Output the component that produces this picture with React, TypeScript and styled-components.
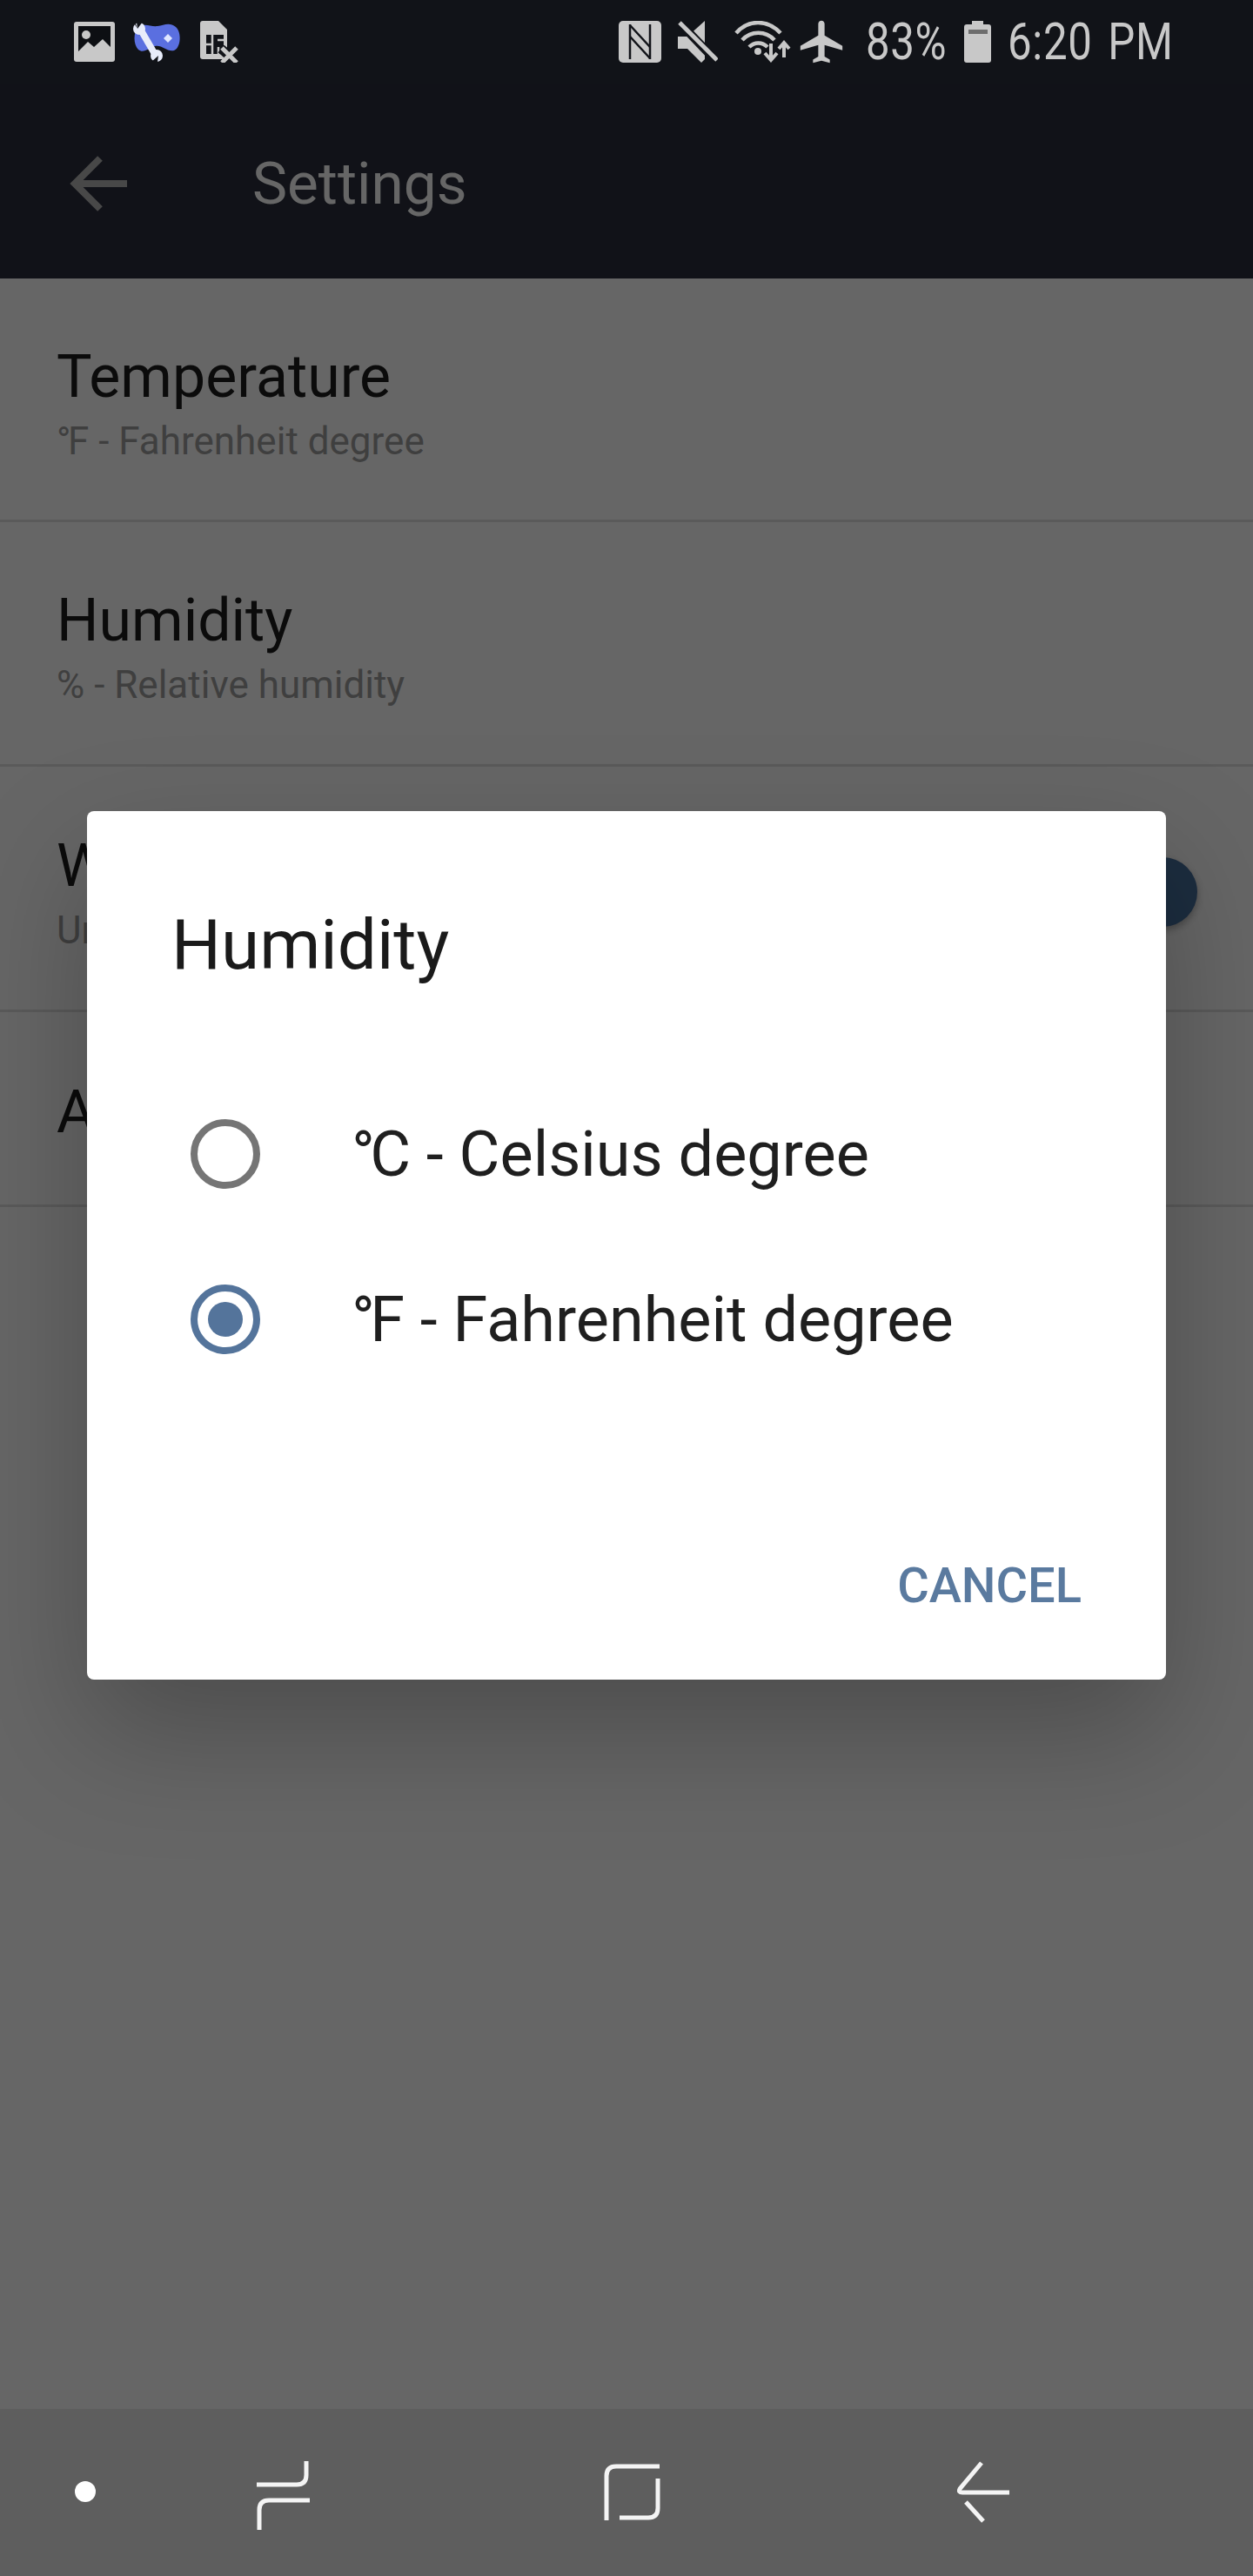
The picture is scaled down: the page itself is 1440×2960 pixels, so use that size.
import styled, { createGlobalStyle } from "styled-components";
import { MdAirplanemodeActive } from "react-icons/md";

const GlobalStyle = createGlobalStyle`
	html, body {
		margin: 0;
		padding: 0;
		background: #fff;
	}
	* {
		box-sizing: border-box;
	}
`;

const Phone = styled.div`
	position: relative;
	width: 1440px;
	height: 2960px;
	display: flex;
	flex-direction: column;
	overflow: hidden;
	background: #fff;
	font-family: Roboto, "Liberation Sans", sans-serif;
`;

const StatusBar = styled.div`
	position: relative;
	z-index: 2;
	height: 96px;
	flex: none;
	display: flex;
	align-items: center;
	justify-content: space-between;
	padding: 0 91px 0 85px;
	background: #111318;
	color: #c8c8c8;
`;

const IconGroup = styled.div<{ gap: number }>`
	display: flex;
	align-items: center;
	gap: ${props => props.gap}px;
`;

const StatusText = styled.span<{ width: number }>`
	display: inline-block;
	width: ${props => props.width}px;
	font-size: 60px;
	line-height: 72px;
	font-weight: 400;
	word-spacing: 6px;
	letter-spacing: 0.8px;
	white-space: nowrap;
	transform: scaleX(0.82);
	transform-origin: left center;
`;

const PlaneIcon = styled(MdAirplanemodeActive)`
	margin: 0 3px 0 -14px;
`;

const Toolbar = styled.div`
	height: 224px;
	flex: none;
	display: flex;
	align-items: center;
	padding: 6px 0 0 80px;
	background: #2b2f3c;
	color: #fff;
`;

const ToolbarTitle = styled.h1`
	margin: 0 0 0 144px;
	font-size: 67.5px;
	line-height: 80px;
	font-weight: 400;
`;

const Row = styled.div<{ height: number }>`
	height: ${props => props.height}px;
	flex: none;
	display: flex;
	align-items: center;
	justify-content: space-between;
	padding: 8px 64px 0 65px;
	border-bottom: 3px solid #e0e0e0;
`;

const RowTitle = styled.div`
	font-size: 68px;
	line-height: 84px;
	color: #1c1c1c;
`;

const RowSub = styled.div`
	margin-top: 4px;
	font-size: 44px;
	line-height: 56px;
	color: #9e9e9e;
`;

const Degree = styled.span`
	letter-spacing: -0.08em;
`;

const Thumb = styled.div`
	width: 80px;
	height: 80px;
	border-radius: 50%;
	background: #48709f;
	box-shadow: 0 4px 8px rgba(0, 0, 0, 0.3);
`;

const Scrim = styled.div`
	position: absolute;
	inset: 0;
	z-index: 1;
	padding-top: 932px;
	background: rgba(0, 0, 0, 0.6);
`;

const Dialog = styled.div`
	width: 1240px;
	height: 998px;
	margin-left: 100px;
	display: flex;
	flex-direction: column;
	background: #fff;
	border-radius: 8px;
	box-shadow: 0 60px 140px rgba(0, 0, 0, 0.25);
`;

const DialogTitle = styled.h2`
	margin: 0;
	padding: 108px 0 0 97px;
	font-size: 80px;
	line-height: 92px;
	font-weight: 400;
	color: #1a1a1a;
`;

const Options = styled.div`
	margin-top: 99px;
	display: flex;
	flex-direction: column;
`;

const Option = styled.div`
	height: 190px;
	display: flex;
	align-items: center;
	gap: 105px;
	padding-left: 119px;
	font-size: 72px;
	color: #1f1f1f;
`;

const Radio = styled.div<{ checked?: boolean }>`
	width: 80px;
	height: 80px;
	flex: none;
	display: flex;
	align-items: center;
	justify-content: center;
	border-radius: 50%;
	border: 8px solid ${props => (props.checked ? "#54749b" : "#757575")};
	&::after {
		content: "";
		display: ${props => (props.checked ? "block" : "none")};
		width: 40px;
		height: 40px;
		border-radius: 50%;
		background: #54749b;
	}
`;

const DialogFooter = styled.div`
	margin-top: auto;
	padding: 0 97px 75px 0;
	display: flex;
	justify-content: flex-end;
`;

const CancelButton = styled.button`
	padding: 0;
	border: 0;
	background: none;
	font-family: inherit;
	font-size: 56px;
	line-height: 66px;
	font-weight: 500;
	color: #5a7a9f;
`;

const Spacer = styled.div`
	flex: 1;
`;

const NavBar = styled.div`
	position: relative;
	z-index: 2;
	height: 192px;
	flex: none;
	background: #5e5e5e;
`;

const NavIcons = styled.svg`
	display: block;
`;

const ImageIcon = () => (
	<svg width="47" height="46" viewBox="0 0 47 46">
		<rect width="47" height="46" rx="3" fill="#c8c8c8" />
		<rect x="5" y="5" width="37" height="36" fill="#0d0f13" />
		<circle cx="14" cy="15" r="5" fill="#c8c8c8" />
		<path d="M5 34 L16 23 L23 29 L33 20 L42 29 V41 H5 Z" fill="#c8c8c8" />
	</svg>
);

const GameToolIcon = () => (
	<svg width="56" height="46" viewBox="0 0 56 46">
		<path
			d="M6 6 C14 1 20 6 28 5 C35 4 42 0 49 6 C56 12 55 30 47 33 C39 35 33 26 25 28 C18 30 12 37 6 32 C0 26 0 12 6 6 Z"
			fill="#5a6fe0"
		/>
		<path d="M40 14 l5 5-5 5-5-5z" fill="#dfe6ff" />
		<path d="M8 8 L26 39" stroke="#e8ecfa" strokeWidth="7.5" />
		<circle cx="7" cy="8" r="7" fill="#e8ecfa" />
		<circle cx="27" cy="39" r="7" fill="#e8ecfa" />
		<path d="M5 8 L2 0 L0 0 Z M5 8 L4 0 L11 0 Z" fill="#111318" />
		<path d="M29 39 L28 46 L21 46 Z" fill="#111318" />
	</svg>
);

const SimOffIcon = () => (
	<svg width="44" height="48" viewBox="0 0 44 48">
		<path d="M3 0 H21 L31 10 V44 H3 Q0 44 0 41 V3 Q0 0 3 0 Z" fill="#c8c8c8" />
		<path d="M7 16 H27 V38 H7 Z" fill="#111318" />
		<path d="M14 16 V38 M7 27 H14 M20 22 H27 M21 30 V38" stroke="#c8c8c8" strokeWidth="2.5" />
		<path d="M24 32 L42 47" stroke="#111318" strokeWidth="11" />
		<path d="M25 31 L42 48 M42 31 L25 48" stroke="#c8c8c8" strokeWidth="5" />
	</svg>
);

const NfcIcon = () => (
	<svg width="49" height="48" viewBox="0 0 49 48">
		<rect width="49" height="48" rx="5" fill="#c8c8c8" />
		<path d="M13 4 V44 M36 4 V44" stroke="#111318" strokeWidth="2.5" />
		<path d="M13 5 L36 30 M13 18 L36 43" stroke="#111318" strokeWidth="2.5" />
	</svg>
);

const MuteIcon = () => (
	<svg width="46" height="48" viewBox="0 0 46 48">
		<path d="M0 18 H11 L31 0 V44 L27 48 L11 32 H0 Z" fill="#c8c8c8" />
		<path d="M2 2 L44 46" stroke="#111318" strokeWidth="10" />
		<path d="M2 2 L45 45" stroke="#c8c8c8" strokeWidth="5" />
	</svg>
);

const WifiIcon = () => (
	<svg width="66" height="48" viewBox="0 0 66 48">
		<g fill="none" stroke="#c8c8c8" strokeWidth="4.5">
			<path d="M2 14 C16 -2 38 -2 53 14" />
			<path d="M9 22 C19 11 36 11 46 22" />
			<path d="M17 30 C23 24 32 24 38 30" />
		</g>
		<circle cx="27" cy="35" r="4" fill="#c8c8c8" />
		<path d="M42 26 V44 M35 37 L42 45 L49 37" stroke="#c8c8c8" strokeWidth="4" fill="none" />
		<path d="M57 42 V26 M51 32 L57 25 L63 32" stroke="#c8c8c8" strokeWidth="4" fill="none" />
	</svg>
);

const BatteryIcon = () => (
	<svg width="31" height="48" viewBox="0 0 31 48">
		<path d="M9 0 H22 V4 H28 Q31 4 31 7 V45 Q31 48 28 48 H3 Q0 48 0 45 V7 Q0 4 3 4 H9 Z" fill="#c8c8c8" />
		<rect x="5" y="10" width="22" height="5" fill="#6d6d6d" />
	</svg>
);

const BackArrow = () => (
	<svg width="66" height="64" viewBox="0 0 66 64">
		<path d="M66 32 H6 M35 3 L6 32 L35 61" stroke="#b4b4b4" strokeWidth="8" fill="none" />
	</svg>
);

const rows = [
	{ title: "Temperature", sub: "F - Fahrenheit degree", unit: "°", height: 280 },
	{ title: "Humidity", sub: "% - Relative humidity", height: 281 },
	{ title: "Wind speed", sub: "Unit of measure", height: 282, toggle: true },
	{ title: "About", height: 224 },
];

const App: React.FC = () => {
	return (
		<Phone>
			<GlobalStyle />
			<StatusBar>
				<IconGroup gap={21}>
					<ImageIcon />
					<GameToolIcon />
					<SimOffIcon />
				</IconGroup>
				<IconGroup gap={19}>
					<NfcIcon />
					<MuteIcon />
					<WifiIcon />
					<PlaneIcon size={58} color="#c8c8c8" />
					<StatusText width={94}>83%</StatusText>
					<BatteryIcon />
					<StatusText width={191}>6:20 PM</StatusText>
				</IconGroup>
			</StatusBar>
			<Toolbar>
				<BackArrow />
				<ToolbarTitle>Settings</ToolbarTitle>
			</Toolbar>
			{rows.map(row => (
				<Row key={row.title} height={row.height}>
					<div>
						<RowTitle>{row.title}</RowTitle>
						{row.sub && (
							<RowSub>
								{row.unit && <Degree>{row.unit}</Degree>}
								{row.sub}
							</RowSub>
						)}
					</div>
					{row.toggle && <Thumb />}
				</Row>
			))}
			<Spacer />
			<Scrim>
				<Dialog>
					<DialogTitle>Humidity</DialogTitle>
					<Options>
						<Option>
							<Radio />
							<span>
								<Degree>°</Degree>C - Celsius degree
							</span>
						</Option>
						<Option>
							<Radio checked />
							<span>
								<Degree>°</Degree>F - Fahrenheit degree
							</span>
						</Option>
					</Options>
					<DialogFooter>
						<CancelButton>CANCEL</CancelButton>
					</DialogFooter>
				</Dialog>
			</Scrim>
			<NavBar>
				<NavIcons width="1440" height="192" viewBox="0 0 1440 192">
					<ellipse cx="98" cy="95" rx="12" ry="12" fill="#fff" />
					<g fill="none" stroke="#f4f4f4" strokeWidth="5">
						<path d="M352 60 V76 Q352 87 341 87 H295" />
						<path d="M356 105 H309 Q298 105 298 116 V139" />
						<path d="M758 66 H708 Q697 66 697 77 V128" />
						<path d="M756 80 V114 Q756 125 745 125 H712" />
						<path d="M1128 62 L1103 92 Q1101 96 1106 96 H1160" />
						<path d="M1110 107 L1130 129" />
					</g>
				</NavIcons>
			</NavBar>
		</Phone>
	);
};

export default App;
